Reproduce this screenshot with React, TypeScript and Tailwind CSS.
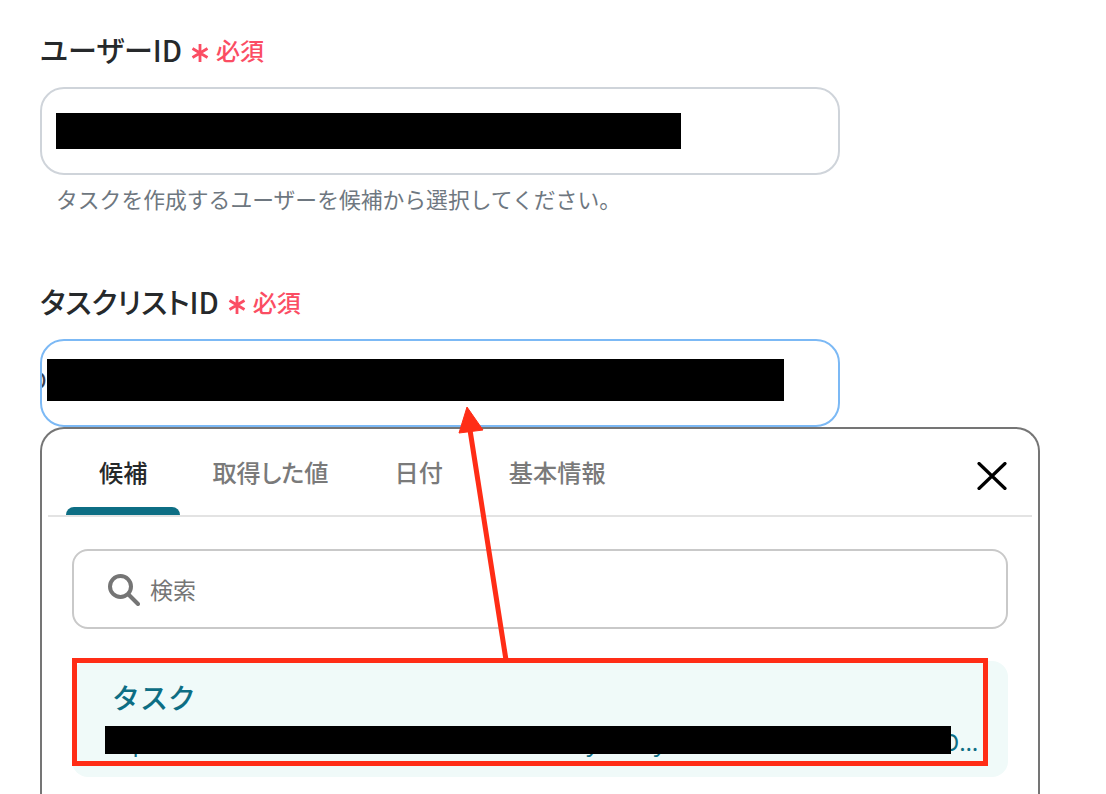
import React from 'react';

const RequiredMark = () => (
  <span className="ml-[9px] flex items-center gap-[7px] text-[#fb4d63]">
    <svg width="18" height="20" viewBox="0 0 18 20" className="mt-[5px]" fill="none" stroke="currentColor" strokeWidth="2.8" strokeLinecap="butt">
      <path d="M9 1v18M1.5 5.5l15 9M16.5 5.5l-15 9" />
    </svg>
    <span className="text-[24px] font-medium [font-feature-settings:'normal']">必須</span>
  </span>
);

const FieldLabel = ({children}: {children: React.ReactNode}) => (
  <div className="flex h-9 items-center text-[29px] font-medium text-[#26292b] [font-feature-settings:'palt']">
    <span>{children}</span>
    <RequiredMark />
  </div>
);

const tabs = ['候補', '取得した値', '日付', '基本情報'];

// hidden under the redaction bar, only the tails and the end of the string show
const taskUrl = '00p' + '0'.repeat(32) + 'y0000y' + '0'.repeat(20) + 'O' + '0'.repeat(20);

export default function App() {
  return (
    <div className="relative h-[794px] w-[1106px] overflow-hidden bg-white pl-10 pt-[32px] font-['Noto_Sans_CJK_JP','Noto_Sans',sans-serif]">
      <FieldLabel>ユーザーID</FieldLabel>
      <div className="relative mt-[19px] h-[88px] w-[800px] rounded-[24px] border-2 border-[#cfd4da] bg-white">
        <div className="absolute left-[14px] top-[24px] h-9 w-[625px] bg-black" />
      </div>
      <p className="mt-[9px] pl-4 text-[21.8px] leading-[30px] text-[#6e7780]">タスクを作成するユーザーを候補から選択してください。</p>

      <div className="mt-[70px]">
        <FieldLabel>タスクリストID</FieldLabel>
      </div>
      <div className="relative mt-[19px] h-[88px] w-[800px] overflow-hidden rounded-[24px] border-2 border-[#7cb9f5] bg-white">
        <span className="absolute left-[-14px] top-[23px] font-['Noto_Sans'] text-[24px] leading-[32px] text-[#3b4250]">O</span>
        <div className="absolute left-[5px] top-[18px] h-[42px] w-[737px] bg-black" />
      </div>

      <div className="h-[400px] w-[1000px] rounded-t-[24px] border-2 border-b-0 border-[#757575] bg-white px-[6px]">
        <div className="flex h-[88px] items-stretch border-b-2 border-[#e3e3e3] pl-[18px]">
          {tabs.map((tab, i) => (
            <div
              key={tab}
              className={
                i === 0
                  ? "relative -mr-px flex items-center px-[33px] text-[24.2px] font-medium text-[#26292b] [font-feature-settings:'palt']"
                  : "relative flex items-center px-[33px] text-[24.2px] font-medium text-[#7a7a7a] [font-feature-settings:'palt']"
              }
            >
              {tab}
              {i === 0 && <span className="absolute inset-x-0 bottom-0 h-2 rounded-t-lg bg-[#0d6e84]" />}
            </div>
          ))}
          <div className="ml-auto flex items-center pr-[25px] pt-2">
            <svg width="30" height="28" viewBox="0 0 30 28" fill="none" stroke="#000" strokeWidth="3.2" strokeLinecap="round">
              <path d="M2 1.5l26 25M28 1.5l-26 25" />
            </svg>
          </div>
        </div>

        <div className="px-6 pt-8">
          <div className="flex h-20 items-center rounded-2xl border-2 border-[#c9c9c9] pl-[34px]">
            <svg width="32" height="32" viewBox="0 0 32 32" fill="none" stroke="#757575" strokeWidth="4" strokeLinecap="round" className="mt-[1px]">
              <circle cx="12.5" cy="12.5" r="10.5" />
              <path d="M20.5 20.5l9.5 9.5" />
            </svg>
            <span className="ml-[10px] text-[23px] text-[#757575]">検索</span>
          </div>

          <div className="relative mt-8 h-[116px] overflow-hidden rounded-2xl bg-[#f0faf9] pl-[40px] pt-[14px] text-[#0d6e84]">
            <div className="text-[28px] font-medium leading-[44px]">タスク</div>
            <div className="mt-[7px] -ml-[7px] w-[877px] truncate font-['Noto_Sans'] text-[24px] leading-[32px]">{taskUrl}</div>
            <div className="absolute left-[33px] top-[65px] h-7 w-[846px] bg-black" />
          </div>
        </div>
      </div>

      <div className="absolute left-[72px] top-[658px] h-[108px] w-[916px] border-[5px] border-[#ff2d16]" />
      <svg className="absolute left-[440px] top-[400px]" width="90" height="270" viewBox="0 0 90 270" fill="none">
        <path d="M66 260L30 30" stroke="#ff2d16" strokeWidth="5" />
        <path d="M27 7L19 33L43 30Z" fill="#ff2d16" stroke="#ff2d16" strokeWidth="1" />
      </svg>
    </div>
  );
}
